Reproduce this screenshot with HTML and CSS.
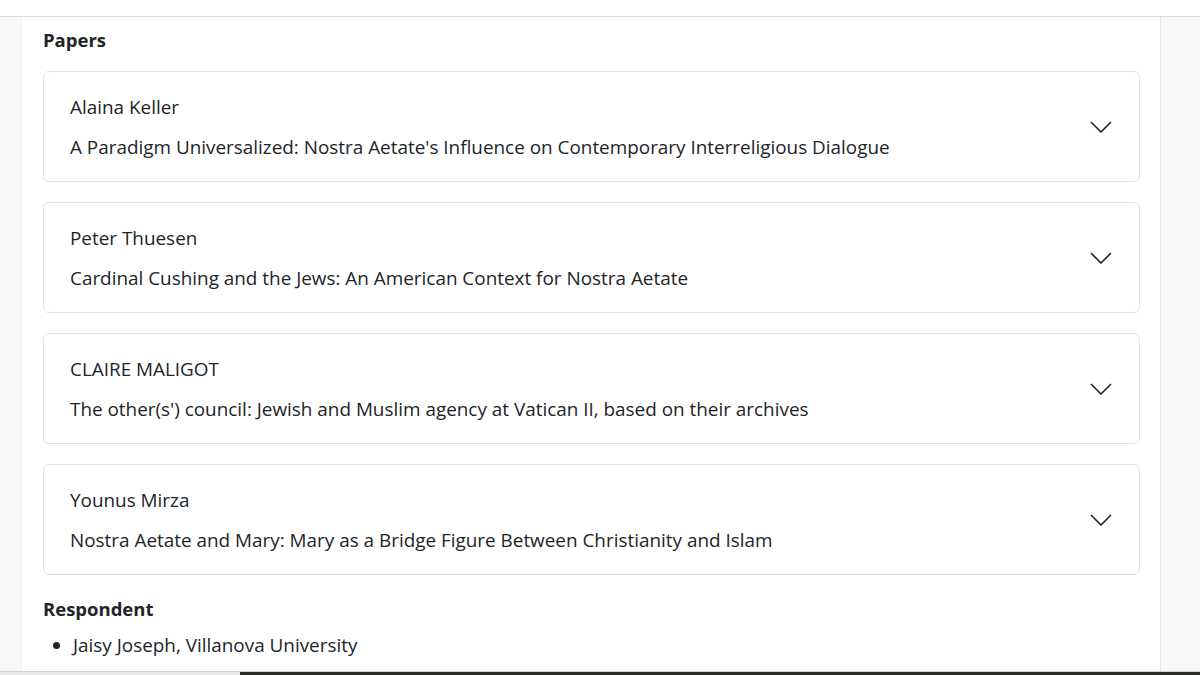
FILE: index.html
```html
<!DOCTYPE html>
<html>
<head>
<meta charset="utf-8">
<link rel="stylesheet" href="styles.css">
</head>
<body>
<div class="topbar"></div>
<div class="frame">
  <div class="side-left"></div>
  <main class="content">
    <h2 class="section">Papers</h2>
    <div class="cards">
      <div class="card">
        <div class="card-text">
          <div class="name">Alaina Keller</div>
          <div class="title">A Paradigm Universalized: Nostra Aetate's Influence on Contemporary Interreligious Dialogue</div>
        </div>
        <svg class="chev" width="22" height="12" viewBox="0 0 22 12"><path d="M1 1 L11 11 L21 1" fill="none" stroke="#212529" stroke-width="1.6"/></svg>
      </div>
      <div class="card">
        <div class="card-text">
          <div class="name">Peter Thuesen</div>
          <div class="title">Cardinal Cushing and the Jews: An American Context for Nostra Aetate</div>
        </div>
        <svg class="chev" width="22" height="12" viewBox="0 0 22 12"><path d="M1 1 L11 11 L21 1" fill="none" stroke="#212529" stroke-width="1.6"/></svg>
      </div>
      <div class="card">
        <div class="card-text">
          <div class="name">CLAIRE MALIGOT</div>
          <div class="title">The other(s') council: Jewish and Muslim agency at Vatican II, based on their archives</div>
        </div>
        <svg class="chev" width="22" height="12" viewBox="0 0 22 12"><path d="M1 1 L11 11 L21 1" fill="none" stroke="#212529" stroke-width="1.6"/></svg>
      </div>
      <div class="card">
        <div class="card-text">
          <div class="name">Younus Mirza</div>
          <div class="title">Nostra Aetate and Mary: Mary as a Bridge Figure Between Christianity and Islam</div>
        </div>
        <svg class="chev" width="22" height="12" viewBox="0 0 22 12"><path d="M1 1 L11 11 L21 1" fill="none" stroke="#212529" stroke-width="1.6"/></svg>
      </div>
    </div>
    <h2 class="section resp">Respondent</h2>
    <ul class="list">
      <li>Jaisy Joseph, Villanova University</li>
    </ul>
  </main>
  <div class="side-right"></div>
</div>
<div class="taskbar"><div class="tb-light"></div><div class="tb-dark"></div></div>
</body>
</html>
```
FILE: styles.css
```css
* { box-sizing: border-box; }
html, body { margin: 0; padding: 0; }
body {
  width: 1200px;
  height: 675px;
  overflow: hidden;
  background: #fff;
  font-family: "Open Sans", "Noto Sans", sans-serif;
  color: #212529;
}
.topbar {
  height: 17px;
  border-bottom: 1px solid #dcdcdc;
  background: #fff;
}
.frame {
  display: flex;
  height: 654px;
}
.side-left {
  width: 22px;
  background: #f7f8fa;
  border-right: 1px solid #eef0f2;
}
.content {
  width: 1138px;
  padding: 0 20px 0 21px;
}
.side-right {
  flex: 1;
  background: #f7f8fa;
  border-left: 1px solid #e6e8ea;
}
.section {
  font-size: 18.5px;
  font-weight: 700;
  margin: 11px 0 0 0;
  line-height: 24px;
}
.cards {
  display: flex;
  flex-direction: column;
  gap: 20px;
  margin-top: 19px;
}
.card {
  height: 111px;
  border: 1px solid #e3e3e3;
  border-radius: 6px;
  display: flex;
  align-items: center;
  padding: 0 27px 0 26px;
}
.card-text { flex: 1; }
.name { font-size: 18.9px; line-height: 24px; }
.title { font-size: 18.9px; line-height: 24px; margin-top: 16px; }
.chev { margin-top: 0; }
.resp { margin-top: 22px; }
.list {
  margin: 12px 0 0 0;
  padding-left: 30px;
  font-size: 18.9px;
  line-height: 24px;
}
.taskbar {
  display: flex;
  height: 4px;
  border-top: 1px solid #cfcfcf;
}
.tb-light { width: 240px; background: #e8e8e8; }
.tb-dark { flex: 1; background: #2b2a27; }
```
